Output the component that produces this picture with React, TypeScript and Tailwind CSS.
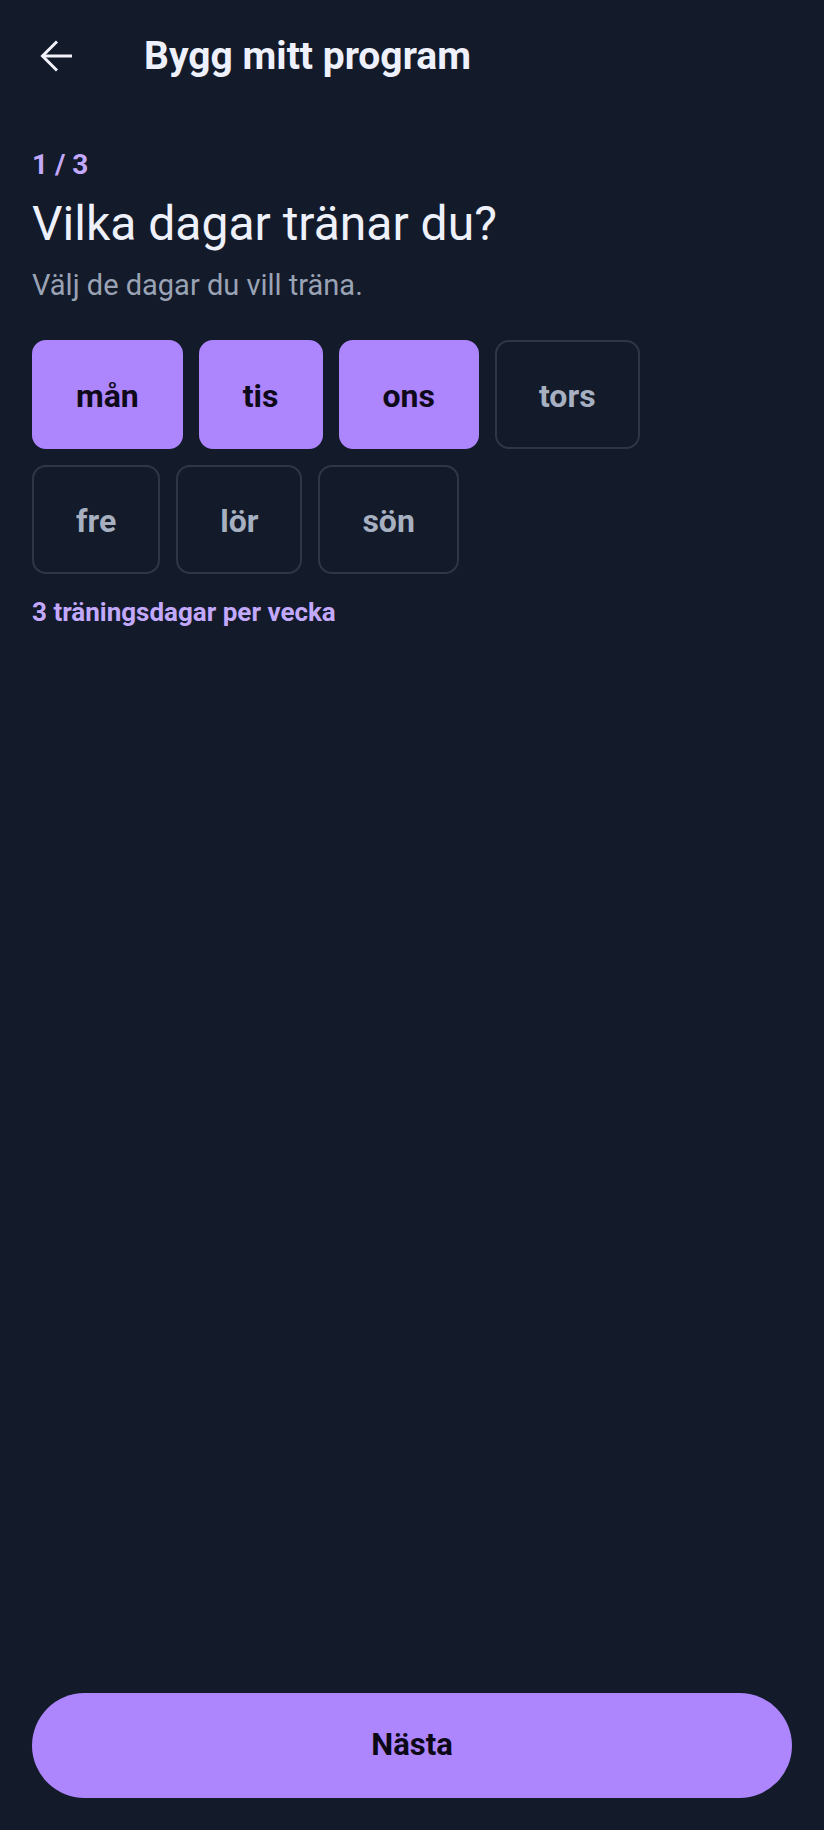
import { useState } from 'react';

const DAYS = ['mån', 'tis', 'ons', 'tors', 'fre', 'lör', 'sön'];

function BackArrow() {
  return (
    <svg width="32" height="32" viewBox="0 0 32 32" fill="none" stroke="currentColor" strokeWidth="3">
      <path d="M32 16H2.5" />
      <path d="M17 1.5L2.5 16L17 30.5" />
    </svg>
  );
}

export default function App() {
  const [selected, setSelected] = useState<string[]>(['mån', 'tis', 'ons']);

  const toggle = (day: string) =>
    setSelected((prev) => (prev.includes(day) ? prev.filter((d) => d !== day) : [...prev, day]));

  return (
    <div className="flex h-screen flex-col bg-[#131a2a] font-['Roboto',sans-serif] text-[#eef1f8]">
      <header className="flex h-[112px] shrink-0 items-center px-10">
        <button className="text-[#f1f3f9]">
          <BackArrow />
        </button>
        <h1 className="ml-[72px] text-[39px] font-bold leading-[46px] text-[#eef1fb]">Bygg mitt program</h1>
      </header>

      <main className="flex flex-1 flex-col px-8">
        <div className="mt-[37px] text-[28px] font-bold leading-[32px] text-[#c3a9fc]">1 / 3</div>
        <h2 className="mt-[14px] text-[48px] font-normal leading-[58px] text-[#eef1fa]">Vilka dagar tränar du?</h2>
        <p className="mt-[15px] text-[29px] leading-[34px] text-[#9aa3b4]">Välj de dagar du vill träna.</p>

        <div className="mt-[38px] flex max-w-[680px] flex-wrap gap-4">
          {DAYS.map((day) => {
            const on = selected.includes(day);
            return (
              <button
                key={day}
                onClick={() => toggle(day)}
                className={
                  on
                    ? 'flex h-[109px] items-center justify-center rounded-[14px] border-2 border-[#ad85fd] bg-[#ad85fd] px-[42px] pt-[3px] text-[32px] font-bold text-[#0e0a1a]'
                    : 'flex h-[109px] items-center justify-center rounded-[14px] border-2 border-[#2f3646] bg-transparent px-[42px] pt-[3px] text-[32px] font-bold text-[#a6b0c0]'
                }
              >
                {day}
              </button>
            );
          })}
        </div>

        <div className="mt-[24px] text-[26px] font-bold leading-[29px] text-[#c3a9fc]">
          {selected.length} träningsdagar per vecka
        </div>

        <button className="mb-8 mt-auto flex h-[105px] w-full shrink-0 items-center justify-center rounded-full bg-[#ad85fd] text-[31px] font-bold text-[#0c0816]">
          Nästa
        </button>
      </main>
    </div>
  );
}
